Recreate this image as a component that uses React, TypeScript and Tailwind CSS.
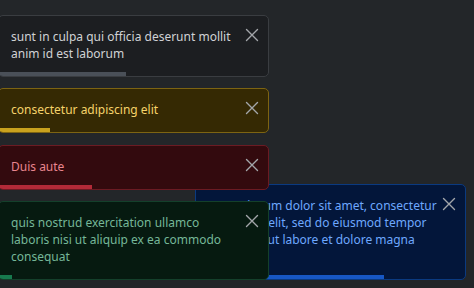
import React from "react";

type Toast = {
  lines: string[];
  bg: string;
  border: string;
  text: string;
  bar: string;
  progress: number;
};

const X = () => (
  <svg width="14" height="14" viewBox="0 0 14 14" className="shrink-0 mt-[0px]">
    <path d="M1.5 1.5 L12.5 12.5 M12.5 1.5 L1.5 12.5" stroke="#a3a6aa" strokeWidth="1.4" strokeLinecap="round" fill="none" />
  </svg>
);

function ToastCard({ t }: { t: Toast }) {
  return (
    <div className={`w-[271px] rounded-[5px] border overflow-hidden ${t.bg} ${t.border}`}>
      <div className="flex items-start pl-[12px] pr-[9px] pt-[12px] pb-[10px]">
        <div className={`flex-1 text-[12px] leading-[17px] whitespace-nowrap ${t.text}`}>
          {t.lines.map((l, i) => (
            <div key={i}>{l}</div>
          ))}
        </div>
        <X />
      </div>
      <div className="h-[4px]">
        <div className={`h-full ${t.bar}`} style={{ width: `${t.progress}px` }} />
      </div>
    </div>
  );
}

const left: Toast[] = [
  {
    lines: ["sunt in culpa qui officia deserunt mollit", "anim id est laborum"],
    bg: "bg-[#1c1e21]",
    border: "border-[#3a3d41]",
    text: "text-[#d0d2d5]",
    bar: "bg-[#4a5058]",
    progress: 127,
  },
  {
    lines: ["consectetur adipiscing elit"],
    bg: "bg-[#352903]",
    border: "border-[#7d6412]",
    text: "text-[#f5d36a]",
    bar: "bg-[#c9a21e]",
    progress: 51,
  },
  {
    lines: ["Duis aute"],
    bg: "bg-[#330a0e]",
    border: "border-[#6b1b23]",
    text: "text-[#e9868f]",
    bar: "bg-[#b32a38]",
    progress: 93,
  },
  {
    lines: ["quis nostrud exercitation ullamco", "laboris nisi ut aliquip ex ea commodo", "consequat"],
    bg: "bg-[#061a10]",
    border: "border-[#14402b]",
    text: "text-[#75b798]",
    bar: "bg-[#177a4e]",
    progress: 13,
  },
];

const blue: Toast = {
  lines: [
    "Lorem ipsum dolor sit amet, consectetur",
    "adipiscing elit, sed do eiusmod tempor",
    "incididunt ut labore et dolore magna",
    "aliqua.",
  ],
  bg: "bg-[#03163a]",
  border: "border-[#0b3a80]",
  text: "text-[#6ea8fe]",
  bar: "bg-[#1757c4]",
  progress: 188,
};

export default function App() {
  return (
    <div
      className="relative w-[474px] h-[288px] overflow-hidden bg-[#232629]"
      style={{ fontFamily: '"Noto Sans", "Open Sans", sans-serif' }}
    >
      <div className="absolute right-[8px] bottom-[8px] z-0">
        <ToastCard t={blue} />
      </div>
      <div className="absolute left-[-2px] bottom-[8px] z-10 flex flex-col gap-[11.5px]">
        {left.map((t, i) => (
          <ToastCard key={i} t={t} />
        ))}
      </div>
    </div>
  );
}
